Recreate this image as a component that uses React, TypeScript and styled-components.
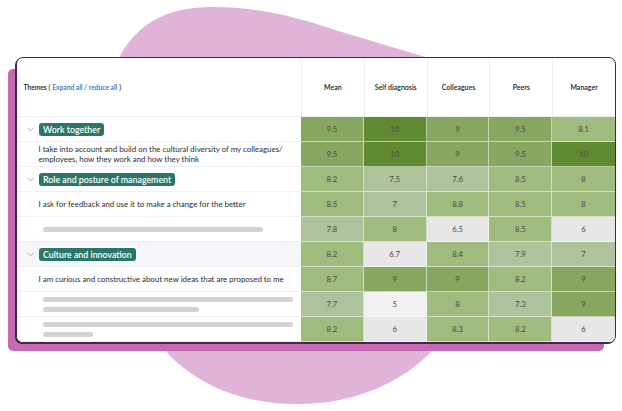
import { Fragment } from 'react';
import styled, { createGlobalStyle } from 'styled-components';

const GlobalStyle = createGlobalStyle`
  html, body {
    margin: 0;
    padding: 0;
    background: #fff;
  }
  body {
    font-family: Lato, 'Noto Sans', sans-serif;
  }
`;

const Page = styled.div`
  position: relative;
  width: 622px;
  height: 411px;
  overflow: hidden;
  box-sizing: border-box;
  padding: 57px 0 0 16px;
`;

const Blob = styled.svg`
  position: absolute;
  left: 0;
  top: 0;
`;

const Card = styled.div`
  position: relative;
  width: 600px;
  box-sizing: border-box;
  border: 1.5px solid #4b2346;
  border-radius: 7px;
  background: #fff;
  box-shadow: -1px 1px 0 #4b2346, -10px 10px 0 -2px #c56bb3;
`;

const Table = styled.div`
  display: grid;
  grid-template-columns: 284px repeat(5, 1fr);
  grid-template-rows: 59px repeat(9, 25px);
  border-radius: 6px;
  overflow: hidden;
`;

const HeadCell = styled.div<{ $first?: boolean }>`
  display: flex;
  align-items: center;
  justify-content: ${(p) => (p.$first ? 'flex-start' : 'center')};
  padding-left: ${(p) => (p.$first ? '6.5px' : '0')};
  border-left: ${(p) => (p.$first ? 'none' : '1px solid #eceef2')};
  border-bottom: 1px solid #eceef2;
  font-size: ${(p) => (p.$first ? '6.7px' : '7px')};
  font-weight: 600;
  color: #222;
  white-space: nowrap;
`;

const Link = styled.span`
  color: #1f6fd1;
  margin: 0 2px;
`;

const ThemeCell = styled.div<{ $shaded?: boolean }>`
  display: flex;
  align-items: center;
  box-sizing: border-box;
  border-bottom: 1px solid #eef0f3;
  background: ${(p) => (p.$shaded ? '#f4f6f9' : '#fff')};
  min-width: 0;
`;

const GroupCell = styled(ThemeCell)`
  gap: 5px;
  padding-left: 10px;
`;

const Chevron = styled.svg`
  flex: none;
`;

const Badge = styled.span`
  background: #2a7769;
  color: #fff;
  border-radius: 3px;
  padding: 0 4px;
  height: 13px;
  line-height: 13px;
  font-size: 8.8px;
  font-weight: 600;
  white-space: nowrap;
`;

const ItemCell = styled(ThemeCell)`
  padding: 0 8px 0 21.5px;
  font-size: 7.9px;
  line-height: 10px;
  color: #2b2b2b;
`;

const SkeletonCell = styled(ThemeCell)`
  flex-direction: column;
  justify-content: center;
  align-items: flex-start;
  gap: 5px;
  padding-left: 25.5px;
`;

const Bar = styled.div<{ $w: number }>`
  width: ${(p) => p.$w}px;
  height: 5px;
  border-radius: 3px;
  background: #d3d3d3;
`;

const ScoreCell = styled.div<{ $bg: string; $last?: boolean }>`
  display: flex;
  align-items: center;
  justify-content: center;
  background: ${(p) => p.$bg};
  border-bottom: 1px solid rgba(255, 255, 255, 0.55);
  border-right: ${(p) => (p.$last ? 'none' : '1px solid rgba(255, 255, 255, 0.55)')};
  font-size: 7.7px;
  color: #4a4a4a;
`;

type Row =
  | { kind: 'group'; label: string; shaded?: boolean; scores: number[] }
  | { kind: 'item'; text: React.ReactNode; scores: number[] }
  | { kind: 'skeleton'; bars: number[]; scores: number[] };

const columns = ['Mean', 'Self diagnosis', 'Colleagues', 'Peers', 'Manager'];

const rows: Row[] = [
  { kind: 'group', label: 'Work together', scores: [9.5, 10, 9, 9.5, 8.1] },
  {
    kind: 'item',
    text: (
      <>
        I take into account and build on the cultural diversity of my colleagues/
        <wbr />
        employees, how they work and how they think
      </>
    ),
    scores: [9.5, 10, 9, 9.5, 10],
  },
  { kind: 'group', label: 'Role and posture of management', scores: [8.2, 7.5, 7.6, 8.5, 8] },
  {
    kind: 'item',
    text: 'I ask for feedback and use it to make a change for the better',
    scores: [8.5, 7, 8.8, 8.5, 8],
  },
  { kind: 'skeleton', bars: [220], scores: [7.8, 8, 6.5, 8.5, 6] },
  { kind: 'group', label: 'Culture and innovation', shaded: true, scores: [8.2, 6.7, 8.4, 7.9, 7] },
  {
    kind: 'item',
    text: 'I am curious and constructive about new ideas that are proposed to me',
    scores: [8.7, 9, 9, 8.2, 9],
  },
  { kind: 'skeleton', bars: [250, 156], scores: [7.7, 5, 8, 7.3, 9] },
  { kind: 'skeleton', bars: [250, 50], scores: [8.2, 6, 8.3, 8.2, 6] },
];

const shade = (v: number) =>
  v >= 10
    ? '#5f8a31'
    : v >= 9
      ? '#87a65f'
      : v >= 8
        ? '#9fbb7e'
        : v >= 7
          ? '#aec39b'
          : v >= 6
            ? '#e7e7e7'
            : '#f2f2f2';

function ThemeFor({ row }: { row: Row }) {
  if (row.kind === 'group') {
    return (
      <GroupCell $shaded={row.shaded}>
        <Chevron width="7" height="5" viewBox="0 0 7 5">
          <polyline points="0.5,0.8 3.5,3.8 6.5,0.8" fill="none" stroke="#a3a3a3" strokeWidth="0.9" />
        </Chevron>
        <Badge>{row.label}</Badge>
      </GroupCell>
    );
  }
  if (row.kind === 'item') {
    return <ItemCell>{row.text}</ItemCell>;
  }
  return (
    <SkeletonCell>
      {row.bars.map((w, i) => (
        <Bar key={i} $w={w} />
      ))}
    </SkeletonCell>
  );
}

export default function App() {
  return (
    <>
      <GlobalStyle />
      <Page>
        <Blob width="622" height="411" viewBox="0 0 622 411">
          <path
            d="M118,60 C135,25 165,8 208,7 C255,6 300,18 335,30 L442,62 L560,200 L433,350 C400,385 350,404 300,404 C245,405 195,385 165,350 L60,200 Z"
            fill="#e0b3d8"
          />
        </Blob>
        <Card>
          <Table>
            <HeadCell $first>
              Themes (<Link>Expand all / reduce all</Link>)
            </HeadCell>
            {columns.map((c) => (
              <HeadCell key={c}>{c}</HeadCell>
            ))}
            {rows.map((row, r) => (
              <Fragment key={r}>
                <ThemeFor row={row} />
                {row.scores.map((v, i) => (
                  <ScoreCell key={i} $bg={shade(v)} $last={i === 4}>
                    {String(v)}
                  </ScoreCell>
                ))}
              </Fragment>
            ))}
          </Table>
        </Card>
      </Page>
    </>
  );
}
